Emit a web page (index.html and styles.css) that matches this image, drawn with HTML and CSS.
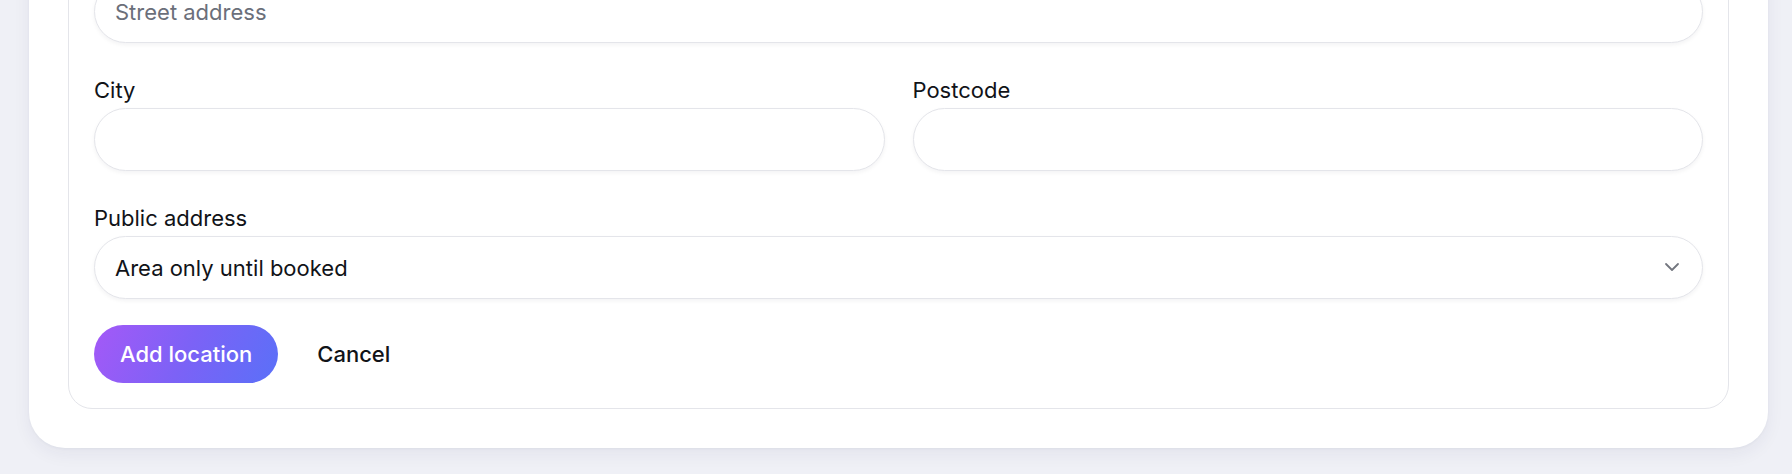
FILE: index.html
```html
<!DOCTYPE html>
<html>
<head>
  <meta charset="utf-8" />
  <title>Add location</title>
  <link rel="stylesheet" href="styles.css">
</head>
<body>
  <div class="page">
    <div class="panel">
      <form class="location-form">
        <div class="fields">
          <div class="field">
            <label class="label" for="street">Address</label>
            <input class="input" id="street" type="text" placeholder="Street address">
          </div>

          <div class="row">
            <div class="field">
              <label class="label" for="city">City</label>
              <input class="input" id="city" type="text">
            </div>
            <div class="field">
              <label class="label" for="postcode">Postcode</label>
              <input class="input" id="postcode" type="text">
            </div>
          </div>

          <div class="field">
            <label class="label" for="visibility">Public address</label>
            <div class="select-wrap">
              <select class="input select" id="visibility">
                <option>Area only until booked</option>
                <option>Always show full address</option>
              </select>
              <svg class="chevron" width="20" height="20" viewBox="0 0 20 20" fill="none">
                <path d="M4 7l6 6 6-6" stroke="currentColor" stroke-width="1.8" stroke-linecap="round" stroke-linejoin="round"/>
              </svg>
            </div>
          </div>
        </div>

        <div class="actions">
          <button class="btn-primary" type="button">Add location</button>
          <button class="btn-link" type="button">Cancel</button>
        </div>
      </form>
    </div>
  </div>
</body>
</html>
```

FILE: styles.css
```css
html, body {
  margin: 0;
  padding: 0;
}

body {
  background: #eff0f6;
  font-family: Inter, "Noto Sans", sans-serif;
  color: #111318;
  overflow: hidden;
}

.page {
  padding: 0 24px 26px 29px;
}

/* the view is scrolled: top of the panel sits above the window */
.panel {
  margin-top: -117px;
  background: #fff;
  border-radius: 36px;
  padding: 39px;
  box-shadow: 0 6px 18px rgba(30, 41, 80, 0.06), 0 1px 3px rgba(30, 41, 80, 0.04);
}

.location-form {
  border: 1px solid #e4e5ea;
  border-radius: 24px;
  padding: 25px;
}

.fields {
  display: flex;
  flex-direction: column;
  gap: 33px;
}

.row {
  display: grid;
  grid-template-columns: 1fr 1fr;
  gap: 28px;
}

.field {
  display: flex;
  flex-direction: column;
}

.label {
  font-size: 22px;
  line-height: 28px;
  font-weight: 400;
  margin-bottom: 4px;
}

.input {
  box-sizing: border-box;
  height: 63px;
  width: 100%;
  border: 1px solid #e4e5ea;
  border-radius: 999px;
  padding: 0 20px;
  background: #fff;
  font-family: inherit;
  font-size: 22px;
  color: #111318;
  box-shadow: 0 2px 4px rgba(20, 24, 40, 0.05);
  outline: none;
}

.input::placeholder {
  color: #6b6f7a;
}

.select-wrap {
  position: relative;
}

.select {
  appearance: none;
  -webkit-appearance: none;
  padding-right: 56px;
}

.chevron {
  position: absolute;
  right: 21px;
  top: 21px;
  color: #73767f;
  pointer-events: none;
}

.actions {
  display: flex;
  align-items: center;
  gap: 24px;
  margin-top: 26px;
}

.btn-primary {
  height: 58px;
  padding: 0 26px;
  border: none;
  border-radius: 999px;
  background: linear-gradient(115deg, #a459f7 0%, #7c62f6 50%, #5a70f8 100%);
  color: #fff;
  font-family: inherit;
  font-size: 22px;
  font-weight: 500;
  cursor: pointer;
}

.btn-link {
  border: none;
  background: none;
  padding: 0 15px;
  font-family: inherit;
  font-size: 22px;
  font-weight: 500;
  color: #111318;
  cursor: pointer;
}
```
